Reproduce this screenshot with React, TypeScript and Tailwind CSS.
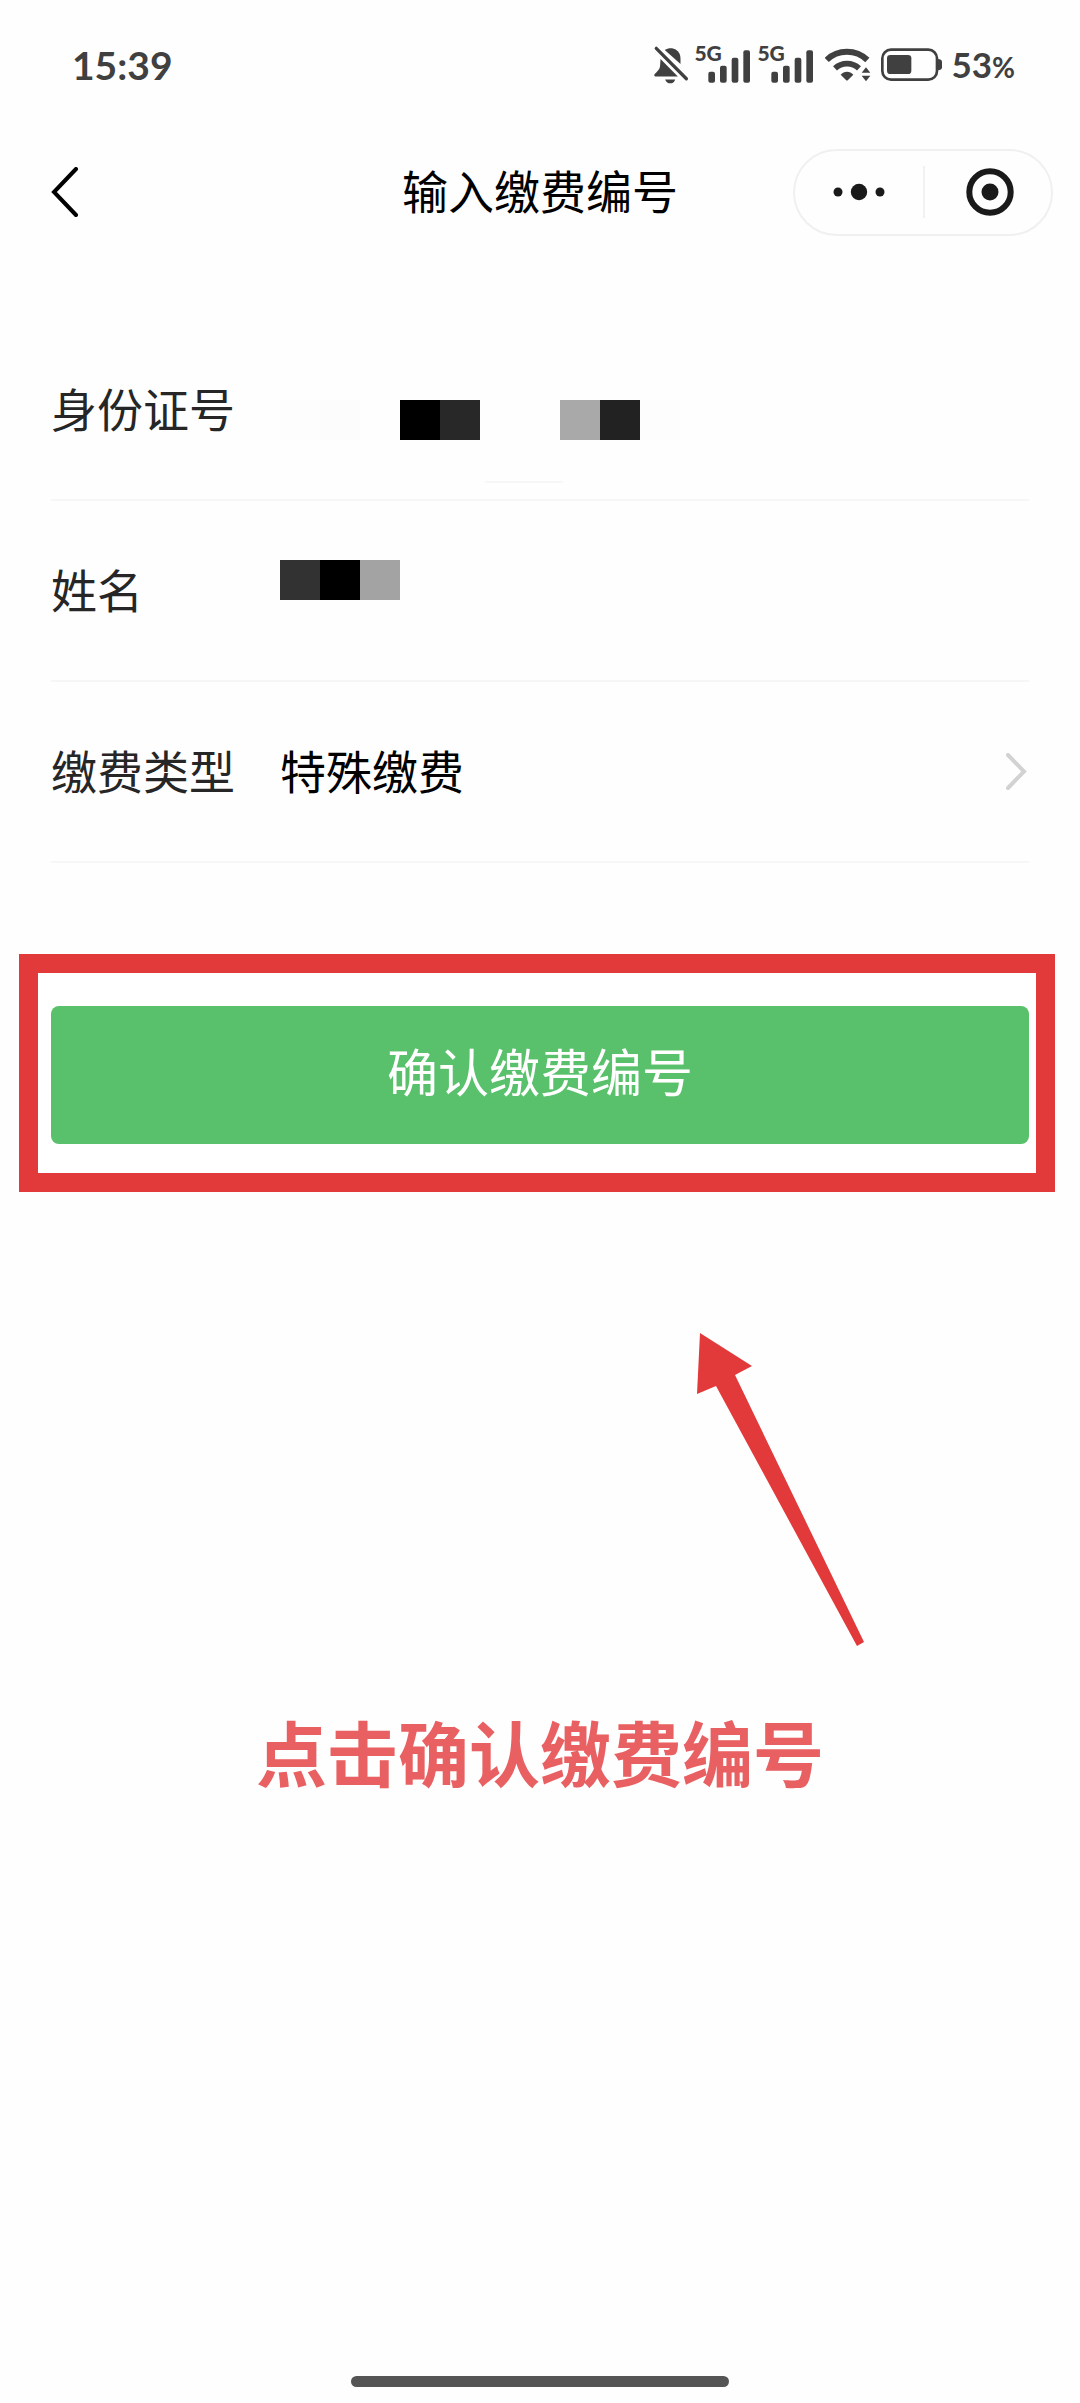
import React from "react";

const idBlocks = [
  "bg-[#fdfdfd]",
  "bg-[#fcfcfc]",
  "bg-transparent",
  "bg-black",
  "bg-[#282828]",
  "bg-transparent",
  "bg-transparent",
  "bg-[#a9a9a9]",
  "bg-[#222222]",
  "bg-[#fdfdfd]",
];

const nameBlocks = ["bg-[#323232]", "bg-black", "bg-[#a3a3a3]"];

function Blocks({ colors }: { colors: string[] }) {
  return (
    <div className="flex">
      {colors.map((color, i) => (
        <span key={i} className={`h-10 w-10 ${color}`} />
      ))}
    </div>
  );
}

function MutedBell() {
  return (
    <svg viewBox="40 40 110 120" className="h-10 w-9" fill="#404040" aria-label="静音">
      <path d="M76 54C84 49 94 48 103 50C117 54 124 66 124 80V97Z" />
      <path d="M63 82L116 135H47C43 135 43 130 46 127C56 117 62 112 62 97Z" />
      <path d="M77 144H108C105 152 100 156 93 156C86 156 80 152 77 144Z" />
      <path d="M50 49L142 142" stroke="#404040" strokeWidth="10" strokeLinecap="round" fill="none" />
    </svg>
  );
}

function Signal() {
  return (
    <div className="relative h-10 w-14">
      <span className="absolute -top-1 left-0 text-[21px] leading-6 font-black">5G</span>
      <svg viewBox="162 40 168 120" className="h-10 w-14" fill="#404040" aria-hidden="true">
        <rect x="205" y="120" width="20" height="33" rx="6" />
        <rect x="240" y="102" width="20" height="51" rx="6" />
        <rect x="275" y="78" width="20" height="75" rx="6" />
        <rect x="310" y="56" width="20" height="97" rx="6" />
      </svg>
    </div>
  );
}

function Wifi() {
  return (
    <svg viewBox="15 45 138 120" className="h-10 w-[46px]" fill="none" stroke="#404040" aria-label="Wi-Fi">
      <path d="M20 90C53 57 108 57 142 90" strokeWidth="18" />
      <path d="M45 115C65 96 97 96 117 115" strokeWidth="17" />
      <path d="M62 134C72 122 90 122 100 134L84 150Q81 153 78 150Z" fill="#404040" stroke="none" />
      <path d="M125 128L138 112L151 128ZM125 137H151L138 154Z" fill="#404040" stroke="none" />
    </svg>
  );
}

function Battery() {
  return (
    <svg viewBox="183 45 183 120" className="h-10 w-[61px]" aria-label="电量">
      <rect x="187" y="59" width="164" height="90" rx="26" fill="none" stroke="#404040" strokeWidth="8" />
      <rect x="201" y="75" width="73" height="57" rx="10" fill="#404040" />
      <path d="M353 87Q366 87 366 96V112Q366 121 353 121Z" fill="#404040" />
    </svg>
  );
}

export default function App() {
  return (
    <div className="flex min-h-screen flex-col bg-[#fefefe] font-['Noto_Sans_CJK_SC',sans-serif] text-[46px] leading-[64px] text-black">
      <div className="flex h-[130px] items-center justify-between pr-[65px] pl-[72px] font-['Lato','Noto_Sans',sans-serif] font-bold text-[#404040]">
        <span className="text-[39px]">15:39</span>
        <div className="flex items-center">
          <MutedBell />
          <div className="ml-[5px] flex gap-[7px]">
            <Signal />
            <Signal />
          </div>
          <div className="ml-3 flex gap-[10px]">
            <Wifi />
            <Battery />
          </div>
          <span className="ml-[9px] text-[35px]">
            53<span className="text-[28px]">%</span>
          </span>
        </div>
      </div>

      <header className="grid h-[124px] grid-cols-[1fr_auto_1fr] items-center px-[27px]">
        <button aria-label="返回" className="flex h-[70px] w-[74px] items-center justify-center">
          <svg viewBox="0 0 27 50" className="h-[50px] w-[27px]" fill="none" stroke="black" strokeWidth="4" strokeLinecap="round">
            <path d="M25 2L3 25L25 48" strokeLinejoin="miter" />
          </svg>
        </button>
        <h1 className="pb-[6px]">输入缴费编号</h1>
        <div className="flex h-[87px] w-[260px] items-center justify-self-end rounded-full border-2 border-[#f0f0f0]">
          <button aria-label="更多" className="flex h-full w-[128px] items-center justify-center">
            <svg viewBox="0 0 52 18" className="h-[18px] w-[52px]" fill="#1a1a1a">
              <circle cx="5" cy="9" r="4.5" />
              <circle cx="26" cy="9" r="8.2" />
              <circle cx="47" cy="9" r="4.5" />
            </svg>
          </button>
          <span className="h-[52px] w-[2px] bg-[#f1f1f1]" />
          <button aria-label="关闭" className="flex h-full flex-1 items-center justify-center pl-1">
            <svg viewBox="0 0 48 48" className="h-12 w-12">
              <circle cx="24" cy="24" r="20.7" fill="none" stroke="#1a1a1a" strokeWidth="6" />
              <circle cx="24" cy="24" r="8.5" fill="#1a1a1a" />
            </svg>
          </button>
        </div>
      </header>

      <main>
        <dl className="mx-[51px] mt-[66px]">
          <div className="flex h-[181px] items-center border-b-2 border-[#f6f6f6]">
            <dt className="w-[229px] pb-[6px] text-[#262626]">身份证号</dt>
            <dd className="relative mt-5">
              <Blocks colors={idBlocks} />
              <span className="absolute top-[81px] left-[205px] h-[2px] w-[78px] bg-[#f7f7f7]" />
            </dd>
          </div>
          <div className="flex h-[181px] items-center border-b-2 border-[#f6f6f6]">
            <dt className="w-[229px] pb-[6px] text-[#262626]">姓名</dt>
            <dd className="mb-[22px]">
              <Blocks colors={nameBlocks} />
            </dd>
          </div>
          <div className="flex h-[181px] items-center border-b-2 border-[#f6f6f6]">
            <dt className="w-[229px] pb-[6px] text-[#262626]" id="type-label">缴费类型</dt>
            <dd className="flex-1">
              <button aria-labelledby="type-label type-value" className="flex w-full items-center justify-between pr-[2px]">
                <span id="type-value" className="pb-[6px]">特殊缴费</span>
                <svg viewBox="0 0 21 37" className="h-[37px] w-[21px]" fill="none" stroke="#d2d2d2" strokeWidth="4" strokeLinecap="round">
                  <path d="M2 2L18 18.5L2 35" />
                </svg>
              </button>
            </dd>
          </div>
        </dl>

        <div className="mt-[91px] mr-[25px] ml-[19px] border-[19px] border-[#e23a3b] bg-white pt-[33px] pr-[7px] pb-[29px] pl-[13px]">
          <button className="block h-[138px] w-full rounded-lg bg-[#59c06b] pb-[10px] text-[51px] text-white">
            确认缴费编号
          </button>
        </div>

        <svg viewBox="0 0 168 316" className="mt-[140px] ml-[64.5%] h-[316px] w-[168px]" fill="#e23a3b" aria-hidden="true">
          <path d="M3 1L55 34L38 43L167 310L160 314L19 54L0 62Z" />
        </svg>
        <p className="mt-[62px] text-center text-[71px] leading-[80px] font-bold text-[#e96062]">点击确认缴费编号</p>
      </main>

      <div className="mx-auto mt-auto mb-[16px] h-[11px] w-[35%] rounded-full bg-[#555555]" />
    </div>
  );
}
